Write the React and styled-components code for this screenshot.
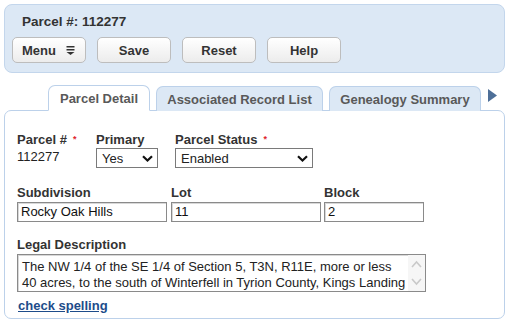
import React from "react";
import styled, { createGlobalStyle } from "styled-components";

const Global = createGlobalStyle`
  html, body { margin: 0; padding: 0; background: #fff; }
  body { font-family: "Liberation Sans", Arial, sans-serif; font-size: 13px; color: #222; }
  * { box-sizing: border-box; }
`;

const Page = styled.div`
  width: 511px;
  height: 324px;
  padding: 4px 6px 0 4px;
  overflow: hidden;
`;

const Header = styled.div`
  height: 69px;
  background: #dce8f5;
  border: 1px solid #c3d6ec;
  border-radius: 8px;
  padding: 9px 0 0 7px;
  display: flex;
  flex-direction: column;
`;

const Title = styled.div`
  font-weight: bold;
  font-size: 13.5px;
  line-height: 16px;
  color: #333;
  margin-left: 10px;
`;

const Toolbar = styled.div`
  display: flex;
  gap: 11px;
  margin-top: 7px;
`;

const Button = styled.button`
  width: ${(p) => p.$w || 74}px;
  height: 26px;
  border: 1px solid #bdbdbd;
  border-radius: 5px;
  background: linear-gradient(#ffffff, #ececec);
  font-family: inherit;
  font-weight: bold;
  font-size: 13px;
  color: #333;
  display: flex;
  align-items: center;
  justify-content: ${(p) => (p.$menu ? "flex-start" : "center")};
  padding: ${(p) => (p.$menu ? "0 0 0 9px" : "0")};
  gap: 10px;
  cursor: pointer;
`;

const TabBar = styled.div`
  display: flex;
  align-items: flex-end;
  gap: 6px;
  margin: 12px 0 -1px 44px;
  height: 26px;
`;

const Tab = styled.div`
  flex: 0 0 auto;
  width: ${(p) => p.$w}px;
  height: ${(p) => (p.$active ? 26 : 25)}px;
  display: flex;
  align-items: center;
  justify-content: center;
  white-space: nowrap;
  font-weight: bold;
  font-size: 13px;
  color: #595959;
  border: 1px solid #bcd1ea;
  border-bottom: ${(p) => (p.$active ? "1px solid #fff" : "none")};
  border-radius: 7px 7px 0 0;
  background: ${(p) => (p.$active ? "#fff" : "#dce8f5")};
  position: relative;
  z-index: 1;
  padding-top: ${(p) => (p.$active ? 1 : 0)}px;
`;

const Arrow = styled.div`
  flex: 0 0 auto;
  align-self: flex-start;
  margin: 4px 0 0 1px;
  display: flex;
`;

const Panel = styled.div`
  height: 209px;
  border: 1px solid #bcd1ea;
  border-radius: 7px;
  padding: 21px 12px 0 12px;
  display: flex;
  flex-direction: column;
`;

const Row = styled.div`
  display: flex;
  margin-top: ${(p) => p.$mt || 0}px;
`;

const Field = styled.div`
  width: ${(p) => (p.$w ? `${p.$w}px` : "auto")};
  display: flex;
  flex-direction: column;
`;

const Label = styled.div`
  font-weight: bold;
  font-size: 13px;
  line-height: 15px;
  color: #333;
  margin-bottom: ${(p) => p.$mb ?? 1}px;
  white-space: nowrap;
`;

const Req = styled.span`
  color: #e0242b;
  font-size: 9px;
  margin-left: 6px;
  vertical-align: 2px;
`;

const Value = styled.div`
  font-size: 13px;
  line-height: 15px;
  color: #222;
  margin-top: 1px;
`;

const Select = styled.div`
  width: ${(p) => p.$w}px;
  height: 20px;
  border: 1px solid #7a7a7a;
  background: #fff;
  display: flex;
  align-items: center;
  justify-content: space-between;
  padding: 0 4px 0 5px;
  font-size: 13px;
  color: #222;
`;

const Input = styled.div`
  width: ${(p) => p.$w}px;
  height: 20px;
  border: 1px solid #8a8a8a;
  box-shadow: inset 1px 1px 0 #d8d8d8;
  padding: 1px 0 0 3px;
  font-size: 13px;
  line-height: 16px;
  color: #111;
`;

const TextArea = styled.div`
  width: 409px;
  height: 38px;
  border: 1px solid #8a8a8a;
  box-shadow: inset 1px 1px 0 #d8d8d8;
  display: flex;
`;

const AreaText = styled.div`
  flex: 1;
  padding: 4px 0 0 4px;
  font-size: 13px;
  line-height: 16px;
  color: #222;
  white-space: pre;
  overflow: hidden;
`;

const Gutter = styled.div`
  width: 17px;
  background: #f6f6f6;
  display: flex;
  flex-direction: column;
  align-items: center;
  justify-content: space-between;
  padding: 5px 0 5px;
`;

const Link = styled.a`
  font-weight: bold;
  font-size: 13px;
  line-height: 15px;
  color: #1d4c8a;
  text-decoration: underline;
  margin: 6px 0 0 1px;
  align-self: flex-start;
`;

const Chevron = () => (
  <svg width="11" height="7" viewBox="0 0 11 7">
    <polyline points="1,1.2 5.5,5.5 10,1.2" fill="none" stroke="#111" strokeWidth="2.2" />
  </svg>
);

const MenuIcon = () => (
  <svg width="9" height="9" viewBox="0 0 9 9">
    <rect x="0.5" y="0" width="8" height="1.5" fill="#333" />
    <rect x="0.5" y="3" width="8" height="1.5" fill="#333" />
    <polygon points="0.5,6 8.5,6 4.5,9" fill="#333" />
  </svg>
);

const ScrollChevron = ({ up }) => (
  <svg width="11" height="8" viewBox="0 0 11 8">
    <polyline
      points={up ? "1,7 5.5,2 10,7" : "1,1 5.5,6 10,1"}
      fill="none"
      stroke="#c9c9c9"
      strokeWidth="1.6"
    />
  </svg>
);

export default function App() {
  return (
    <>
      <Global />
      <Page>
        <Header>
          <Title>Parcel #: 112277</Title>
          <Toolbar>
            <Button $menu>
              Menu <MenuIcon />
            </Button>
            <Button>Save</Button>
            <Button>Reset</Button>
            <Button>Help</Button>
          </Toolbar>
        </Header>

        <TabBar>
          <Tab $active $w={102}>Parcel Detail</Tab>
          <Tab $w={167}>Associated Record List</Tab>
          <Tab $w={152}>Genealogy Summary</Tab>
          <Arrow>
            <svg width="9" height="13" viewBox="0 0 9 13">
              <polygon points="0,0 9,6.5 0,13" fill="#4e6f98" />
            </svg>
          </Arrow>
        </TabBar>

        <Panel>
          <Row>
            <Field $w={79}>
              <Label>
                Parcel #<Req>*</Req>
              </Label>
              <Value>112277</Value>
            </Field>
            <Field $w={79}>
              <Label>Primary</Label>
              <Select $w={62}>
                Yes <Chevron />
              </Select>
            </Field>
            <Field>
              <Label>
                Parcel Status<Req>*</Req>
              </Label>
              <Select $w={138}>
                Enabled <Chevron />
              </Select>
            </Field>
          </Row>

          <Row $mt={17}>
            <Field $w={154}>
              <Label $mb={2}>Subdivision</Label>
              <Input $w={150}>Rocky Oak Hills</Input>
            </Field>
            <Field $w={153}>
              <Label $mb={2}>Lot</Label>
              <Input $w={150}>11</Input>
            </Field>
            <Field>
              <Label $mb={2}>Block</Label>
              <Input $w={100}>2</Input>
            </Field>
          </Row>

          <Row $mt={15}>
            <Field>
              <Label $mb={2}>Legal Description</Label>
              <TextArea>
                <AreaText>
                  {"The NW 1/4 of the SE 1/4 of Section 5, T3N, R11E, more or less\n40 acres, to the south of Winterfell in Tyrion County, Kings Landing"}
                </AreaText>
                <Gutter>
                  <ScrollChevron up />
                  <ScrollChevron />
                </Gutter>
              </TextArea>
            </Field>
          </Row>

          <Link href="#">check spelling</Link>
        </Panel>
      </Page>
    </>
  );
}
